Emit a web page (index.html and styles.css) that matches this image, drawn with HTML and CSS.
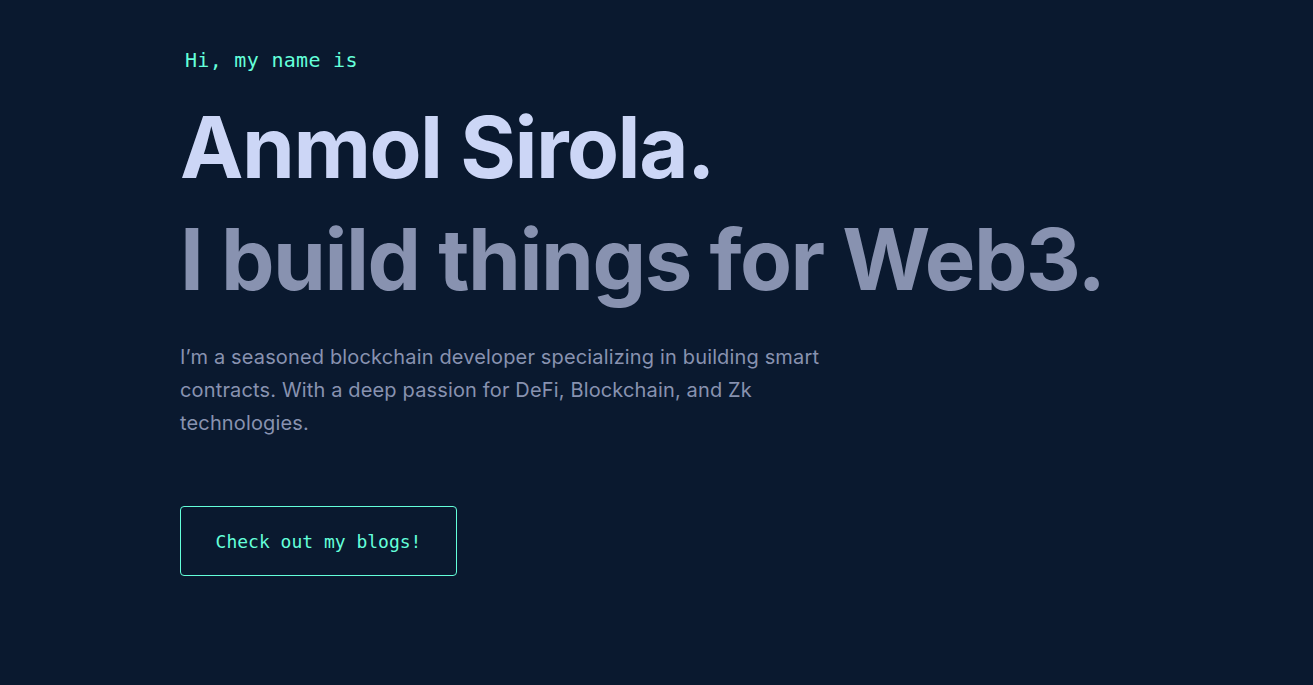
FILE: index.html
```html
<!DOCTYPE html>
<html lang="en">
<head>
<meta charset="utf-8">
<title>Anmol Sirola</title>
<link rel="stylesheet" href="styles.css">
</head>
<body>
<main class="hero">
  <h1 class="intro">Hi, my name is</h1>
  <h2 class="big-heading name">Anmol Sirola.</h2>
  <h3 class="big-heading tagline">I build things for Web3.</h3>
  <p class="summary">I’m a seasoned blockchain developer specializing in building smart contracts. With a deep passion for DeFi, Blockchain, and Zk technologies.</p>
  <a class="cta" href="#">Check out my blogs!</a>
</main>
</body>
</html>
```
FILE: styles.css
```css
html, body {
  margin: 0;
  padding: 0;
  background: #0a192f;
  height: 100%;
}
body {
  font-family: Inter, "Noto Sans", sans-serif;
}
.hero {
  display: flex;
  flex-direction: column;
  align-items: flex-start;
  padding: 48px 0 0 180px;
}
.intro {
  margin: 0 0 0 5px;
  font-family: "DejaVu Sans Mono", "Liberation Mono", monospace;
  font-weight: 400;
  font-size: 20px;
  line-height: 24px;
  letter-spacing: 0.3px;
  color: #64ffda;
}
.big-heading {
  margin: 0;
  font-family: Inter, "Noto Sans", sans-serif;
  font-weight: 700;
  font-size: 85px;
  line-height: 112px;
  letter-spacing: -1.5px;
}
.name {
  margin-top: 20px;
  color: #ccd6f6;
}
.tagline {
  color: #8892b0;
}
.summary {
  margin: 25px 0 0;
  max-width: 680px;
  font-size: 20px;
  line-height: 33px;
  letter-spacing: 0.15px;
  color: #8892b0;
}
.cta {
  margin-top: 66px;
  box-sizing: border-box;
  width: 277px;
  height: 70px;
  display: flex;
  align-items: center;
  justify-content: center;
  border: 1px solid #64ffda;
  border-radius: 4px;
  color: #64ffda;
  text-decoration: none;
  font-family: "DejaVu Sans Mono", "Liberation Mono", monospace;
  font-size: 18px;
}
```
